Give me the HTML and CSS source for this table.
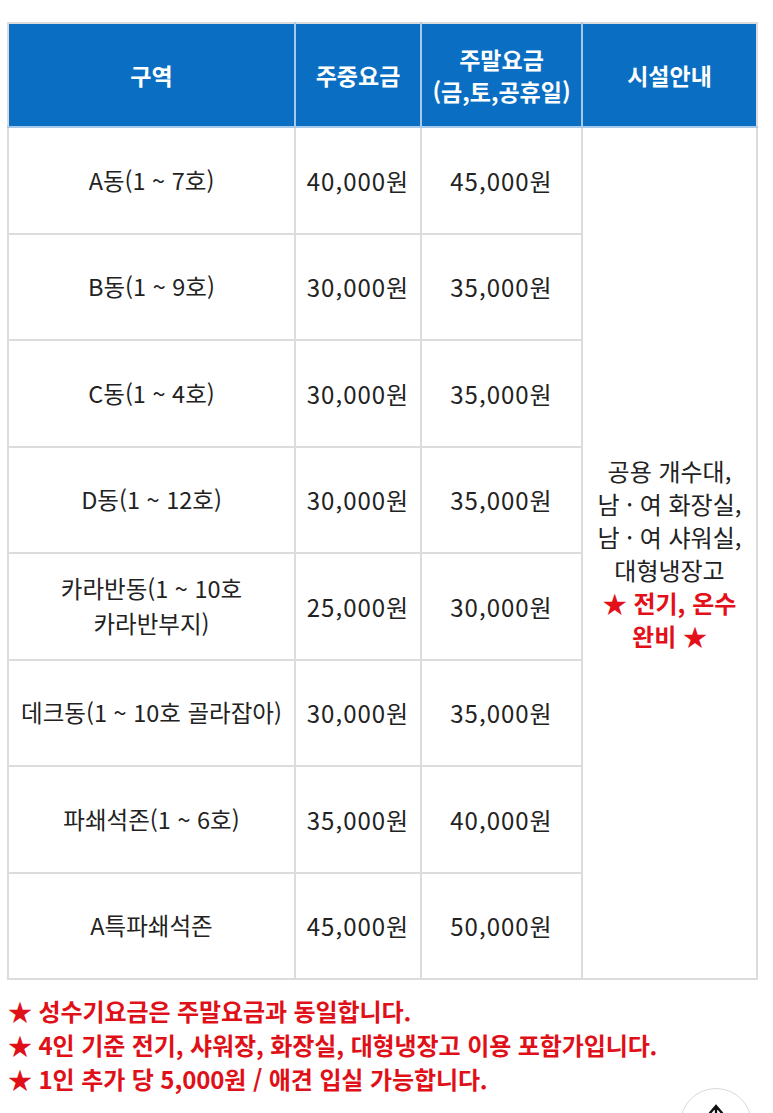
FILE: index.html
```html
<!DOCTYPE html>
<html lang="ko">
<head>
<meta charset="utf-8">
<link rel="stylesheet" href="styles.css">
</head>
<body>
<main class="page">
  <table class="rates">
    <thead>
      <tr>
        <th class="c1">구역</th>
        <th class="c2">주중요금</th>
        <th class="c3">주말요금<br>(금,토,공휴일)</th>
        <th class="c4">시설안내</th>
      </tr>
    </thead>
    <tbody>
      <tr>
        <td>A동(1 ~ 7호)</td>
        <td class="price">40,000원</td>
        <td class="price">45,000원</td>
        <td class="facility" rowspan="8">공용 개수대,<br>남 · 여 화장실,<br>남 · 여 샤워실,<br>대형냉장고<br><span class="hl">★ 전기, 온수<br>완비 ★</span></td>
      </tr>
      <tr><td>B동(1 ~ 9호)</td><td class="price">30,000원</td><td class="price">35,000원</td></tr>
      <tr><td>C동(1 ~ 4호)</td><td class="price">30,000원</td><td class="price">35,000원</td></tr>
      <tr><td>D동(1 ~ 12호)</td><td class="price">30,000원</td><td class="price">35,000원</td></tr>
      <tr><td>카라반동(1 ~ 10호<br>카라반부지)</td><td class="price">25,000원</td><td class="price">30,000원</td></tr>
      <tr><td>데크동(1 ~ 10호 골라잡아)</td><td class="price">30,000원</td><td class="price">35,000원</td></tr>
      <tr><td>파쇄석존(1 ~ 6호)</td><td class="price">35,000원</td><td class="price">40,000원</td></tr>
      <tr><td>A특파쇄석존</td><td class="price">45,000원</td><td class="price">50,000원</td></tr>
    </tbody>
  </table>
  <ul class="notes">
    <li>★ 성수기요금은 주말요금과 동일합니다.</li>
    <li>★ 4인 기준 전기, 샤워장, 화장실, 대형냉장고 이용 포함가입니다.</li>
    <li>★ 1인 추가 당 5,000원 / 애견 입실 가능합니다.</li>
  </ul>
</main>
<button class="to-top" aria-label="맨 위로">
  <svg width="20" height="20" viewBox="0 0 20 20"><path d="M10 3 L4 10 M10 3 L16 10 M10 3 L10 18" stroke="#111" stroke-width="2.4" fill="none" stroke-linecap="round"/></svg>
</button>
</body>
</html>
```

FILE: styles.css
```css
html, body {
  margin: 0;
  padding: 0;
  background: #fff;
}
body {
  font-family: "Noto Sans CJK KR", "Noto Sans", sans-serif;
  color: #222;
  overflow: hidden;
  height: 1113px;
  position: relative;
}
.page {
  padding: 22px 0 0 7px;
}
.rates {
  border-collapse: collapse;
  width: 751px;
  table-layout: fixed;
}
.rates th, .rates td {
  text-align: center;
  vertical-align: middle;
  padding: 0;
}
.rates th {
  background: #0a6fc2;
  color: #fff;
  font-weight: 700;
  font-size: 23px;
  line-height: 32px;
  height: 102px;
  border: 2px solid #a9c9e9;
  border-top-color: #dcdcdc;
}
.rates th.c1 { width: 285px; border-left-color: #dcdcdc; }
.rates th.c2 { width: 124px; }
.rates th.c3 { width: 159px; }
.rates th.c4 { width: 173px; border-right-color: #dcdcdc; }
.rates td {
  font-size: 23.5px;
  line-height: 35px;
  height: 104.5px;
  border: 2px solid #dcdcdc;
}
.rates td.price {
  font-size: 24px;
  letter-spacing: 1px;
}
.rates td.facility {
  font-size: 24px;
  line-height: 33px;
}
.hl {
  color: #e3101a;
  font-weight: 700;
}
.notes {
  list-style: none;
  margin: 14px 0 0 0;
  padding: 0 0 0 1px;
  color: #e01018;
  font-weight: 700;
  font-size: 24px;
  line-height: 34px;
  letter-spacing: -0.1px;
}
.to-top {
  position: absolute;
  left: 680px;
  top: 1088px;
  width: 72px;
  height: 72px;
  border-radius: 50%;
  border: 1.5px solid #d9d9d9;
  background: #fff;
  padding: 14px 0 0 0;
  display: flex;
  justify-content: center;
  align-items: flex-start;
}
```
